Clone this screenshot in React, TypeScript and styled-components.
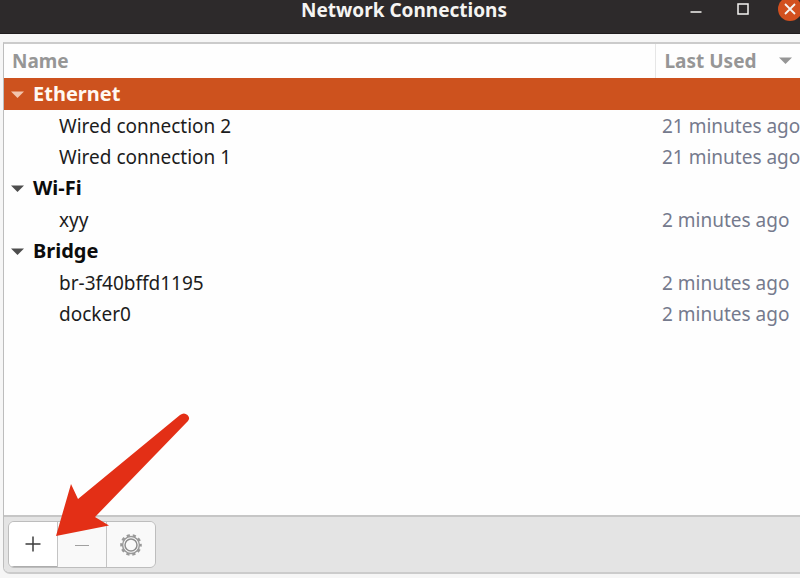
import React, { useState } from "react";
import styled, { createGlobalStyle } from "styled-components";

const GlobalStyle = createGlobalStyle`
  *, *::before, *::after { box-sizing: border-box; }
  html, body { margin: 0; overflow: hidden; }
  body, button, table {
    font-family: "Noto Sans", "Open Sans", sans-serif;
    font-size: 19px;
    line-height: 24px;
  }
`;

const Window = styled.div`
  display: flex;
  flex-direction: column;
  min-height: 100vh;
  overflow: hidden;
  background: #f6f6f6;
`;

const TitleBar = styled.header`
  display: grid;
  grid-template-columns: 1fr auto 1fr;
  align-items: start;
  height: 34px;
  padding-left: 8px;
  background: #2d2a2b;
  border-bottom: 1px solid #1f1c1d;
`;

const Title = styled.h1`
  grid-column: 2;
  margin: 0;
  font-size: 19px;
  line-height: 20px;
  font-weight: 700;
  color: #f5f4f2;
  white-space: nowrap;
`;

const WindowControls = styled.div`
  display: flex;
  justify-content: flex-end;
  gap: 23px;
  height: 21px;
  margin-right: -2px;
  align-items: flex-end;
`;

const ControlButton = styled.button<{ $accent?: boolean }>`
  display: grid;
  place-items: center;
  flex: none;
  width: 24px;
  height: 24px;
  padding: 0;
  border: 0;
  border-radius: 50%;
  background: ${(p) => (p.$accent ? "#d2501f" : "transparent")};
  color: #f5f4f2;
`;

const Panel = styled.main`
  display: flex;
  flex-direction: column;
  flex: 1;
  margin: 8px 0 4px 3px;
  border: 2px solid #cbcbcb;
  border-left: 1px solid #bdbdbd;
  border-right: 0;
  border-bottom-left-radius: 7px;
  background: #fefefe;
`;

const ListArea = styled.div`
  flex: 1;
`;

const Tree = styled.table`
  width: 100%;
  table-layout: fixed;
  border-collapse: collapse;
`;

const HeadCell = styled.th<{ $last?: boolean }>`
  width: ${(p) => (p.$last ? "145px" : "auto")};
  height: 34px;
  padding: 0 8px 1px ${(p) => (p.$last ? "9px" : "8px")};
  border-left: ${(p) => (p.$last ? "1px solid #e6e6e6" : "0")};
  text-align: left;
  color: #969696;
`;

const SortButton = styled.button`
  display: flex;
  align-items: center;
  justify-content: space-between;
  width: 100%;
  padding: 0;
  border: 0;
  background: none;
  color: inherit;
  font-weight: 700;
  white-space: nowrap;
`;

const GroupRow = styled.tr<{ $selected: boolean }>`
  height: 32px;
  background: ${(p) => (p.$selected ? "#cd521e" : "transparent")};
  color: ${(p) => (p.$selected ? "#fff8f2" : "#0c0c0c")};
  svg { color: ${(p) => (p.$selected ? "#f2c5ae" : "#4d4d4d")}; }
`;

const GroupCell = styled.td`
  padding: 0 0 0 7px;
`;

const GroupButton = styled.button`
  display: flex;
  align-items: center;
  gap: 9px;
  width: 100%;
  padding: 0;
  border: 0;
  background: none;
  color: inherit;
  font-size: 20px;
  font-weight: 700;
`;

const ItemRow = styled.tr`
  height: 31px;
`;

const NameCell = styled.td`
  padding: 0 0 0 55px;
  color: #1c1c1c;
`;

const UsedCell = styled.td`
  padding: 0 0 0 7px;
  color: #757a8d;
  white-space: nowrap;
`;

const Toolbar = styled.footer`
  position: relative;
  padding: 4px;
  border-top: 2px solid #c6c6c6;
  border-bottom-left-radius: 5px;
  background: #e4e4e4;
`;

const ButtonGroup = styled.div`
  display: inline-flex;
  vertical-align: top;
  border: 1px solid #bdbdbd;
  border-radius: 6px;
  overflow: hidden;
`;

const ToolButton = styled.button<{ $primary?: boolean }>`
  display: grid;
  place-items: center;
  width: ${(p) => (p.$primary ? "48px" : "49px")};
  height: 45px;
  padding: 0;
  border: 0;
  border-left: ${(p) => (p.$primary ? "0" : "1px solid #c4c4c4")};
  border-bottom: ${(p) => (p.$primary ? "1px solid #adadad" : "0")};
  background: ${(p) => (p.$primary ? "#fff" : "#f9f9f9")};
  color: ${(p) => (p.$primary ? "#3d3d3d" : "#a0a0a0")};
`;

const Pointer = styled.svg`
  position: absolute;
  left: 52px;
  bottom: 35px;
  pointer-events: none;
`;

const Triangle = () => (
  <svg width="13" height="7" viewBox="0 0 13 7" aria-hidden="true">
    <path d="M0 0.5H13L6.5 7Z" fill="currentColor" />
  </svg>
);

const GearIcon = () => (
  <svg width="24" height="24" viewBox="-12 -12 24 24" fill="none" aria-hidden="true">
    <circle r="9.6" stroke="#999" strokeWidth="2.4" strokeDasharray="3.2 2.832" strokeDashoffset="1.6" />
    <circle r="8.4" fill="#f9f9f9" stroke="#999" strokeWidth="1.5" />
    <circle r="6" stroke="#8e8e8e" strokeWidth="1.5" />
  </svg>
);

const groups = [
  {
    name: "Ethernet",
    items: [
      { name: "Wired connection 2", used: "21 minutes ago" },
      { name: "Wired connection 1", used: "21 minutes ago" },
    ],
  },
  { name: "Wi-Fi", items: [{ name: "xyy", used: "2 minutes ago" }] },
  {
    name: "Bridge",
    items: [
      { name: "br-3f40bffd1195", used: "2 minutes ago" },
      { name: "docker0", used: "2 minutes ago" },
    ],
  },
];

export default function App() {
  const [selected, setSelected] = useState("Ethernet");

  return (
    <>
      <GlobalStyle />
      <Window>
        <TitleBar>
          <Title>Network Connections</Title>
          <WindowControls>
            <ControlButton aria-label="Minimize">
              <svg width="12" height="12" viewBox="0 0 12 12" aria-hidden="true">
                <path d="M0.5 9H11.5" stroke="currentColor" strokeWidth="1.5" />
              </svg>
            </ControlButton>
            <ControlButton aria-label="Maximize">
              <svg width="12" height="12" viewBox="0 0 12 12" aria-hidden="true">
                <rect x="1" y="1" width="10" height="10" fill="none" stroke="currentColor" strokeWidth="1.5" />
              </svg>
            </ControlButton>
            <ControlButton $accent aria-label="Close">
              <svg width="12" height="12" viewBox="0 0 12 12" aria-hidden="true">
                <path d="M1 1L11 11M11 1L1 11" stroke="currentColor" strokeWidth="1.8" />
              </svg>
            </ControlButton>
          </WindowControls>
        </TitleBar>
        <Panel>
          <ListArea>
            <Tree>
              <thead>
                <tr>
                  <HeadCell scope="col">
                    <SortButton>Name</SortButton>
                  </HeadCell>
                  <HeadCell scope="col" $last>
                    <SortButton>
                      Last Used
                      <Triangle />
                    </SortButton>
                  </HeadCell>
                </tr>
              </thead>
              {groups.map((group) => (
                <tbody key={group.name}>
                  <GroupRow $selected={selected === group.name}>
                    <GroupCell colSpan={2}>
                      <GroupButton onClick={() => setSelected(group.name)}>
                        <Triangle />
                        {group.name}
                      </GroupButton>
                    </GroupCell>
                  </GroupRow>
                  {group.items.map((item) => (
                    <ItemRow key={item.name}>
                      <NameCell>{item.name}</NameCell>
                      <UsedCell>{item.used}</UsedCell>
                    </ItemRow>
                  ))}
                </tbody>
              ))}
            </Tree>
          </ListArea>
          <Toolbar>
            <ButtonGroup>
              <ToolButton $primary aria-label="Add">
                <svg width="16" height="16" viewBox="0 0 16 16" aria-hidden="true">
                  <path d="M8 0.5V15.5M0.5 8H15.5" stroke="currentColor" strokeWidth="1.5" />
                </svg>
              </ToolButton>
              <ToolButton aria-label="Remove">
                <svg width="14" height="16" viewBox="0 0 14 16" aria-hidden="true">
                  <path d="M0 8.5H14" stroke="currentColor" strokeWidth="1.2" />
                </svg>
              </ToolButton>
              <ToolButton aria-label="Settings">
                <GearIcon />
              </ToolButton>
            </ButtonGroup>
            <Pointer width="134" height="124" viewBox="56 413 134 124" aria-hidden="true">
              <path
                d="M56 536L71 484L78 499L180 415Q184 412 187.500 415Q190.500 418 188 421L95 517L109 525.500Z"
                fill="#e32f16"
              />
            </Pointer>
          </Toolbar>
        </Panel>
      </Window>
    </>
  );
}
